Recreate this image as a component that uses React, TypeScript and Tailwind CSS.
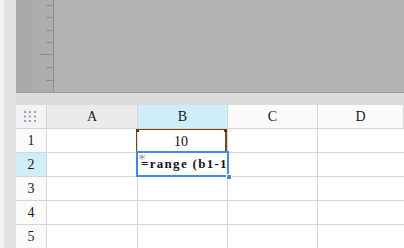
import React from "react";

const serif = { fontFamily: "'Liberation Serif', 'DejaVu Serif', serif" };

const cols = [
  { label: "A", w: "w-[91px]", bg: "bg-[#ebebeb]" },
  { label: "B", w: "w-[90px]", bg: "bg-[#cdeefa]" },
  { label: "C", w: "w-[90px]", bg: "bg-[#fafafa]" },
  { label: "D", w: "flex-1", bg: "bg-[#fafafa]" },
];

function Ruler() {
  const ticks = [5, 17, 30, 42, 54, 67, 80];
  return (
    <svg width="21" height="92" className="block">
      {ticks.map((y) => (
        <line key={y} x1={y === 54 ? 7 : 14} x2={21} y1={y + 0.5} y2={y + 0.5} stroke="#8e8e8e" strokeWidth={1} />
      ))}
    </svg>
  );
}

function DotGrid() {
  return (
    <svg width="14" height="12" className="block">
      {[0, 1, 2].map((r) =>
        [0, 1, 2].map((c) => <rect key={`${r}${c}`} x={c * 5} y={r * 4.5} width={2} height={2} fill="#a2a2a8" />)
      )}
    </svg>
  );
}

export default function App() {
  const rows = [1, 2, 3, 4, 5];
  return (
    <div className="flex w-[404px] h-[248px] overflow-hidden bg-white" style={serif}>
      <div className="w-[4px] bg-[#f1f1f1]" />
      <div className="w-[12px] bg-[#e2e2e2]" />
      <div className="flex-1 flex flex-col min-w-0">
        {/* preview area */}
        <div className="h-[93px] flex border-b border-[#9c9c9c] shrink-0">
          <div className="w-[16px] bg-[#a9a9a9]" />
          <div className="w-[21px] bg-[#adadad]">
            <Ruler />
          </div>
          <div className="w-px bg-[#8f8f8f]" />
          <div className="flex-1 bg-[#b3b3b3]" />
        </div>
        <div className="h-[12px] bg-[#dcdcdc] shrink-0" />

        {/* header row */}
        <div className="flex h-[24px] shrink-0 border-b border-[#d6d6d6] text-[14px] text-[#1a1a1a]">
          <div className="w-[31px] flex items-center justify-center bg-[#f3f3f6] border-r border-[#d6d6d6]">
            <DotGrid />
          </div>
          {cols.map((c) => (
            <div key={c.label} className={`${c.w} ${c.bg} flex items-center justify-center border-r border-[#d6d6d6]`}>
              {c.label}
            </div>
          ))}
        </div>

        {rows.map((r) => (
          <div key={r} className="flex h-[24px] shrink-0 border-b border-[#d6d6d6] text-[14px] text-[#1a1a1a]">
            <div
              className={`w-[31px] flex items-center justify-center border-r border-[#d6d6d6] ${
                r === 2 ? "bg-[#d0eefa]" : "bg-[#fbfbfb]"
              }`}
            >
              {r}
            </div>
            <div className="w-[91px] border-r border-[#d6d6d6]" />
            <div className="w-[90px] border-r border-[#d6d6d6] relative">
              {r === 1 && (
                <div className="absolute left-[-2px] top-0 w-[91px] h-[24px] border border-[#7b4a1c] border-r-2 flex items-center justify-center text-[#111]">
                  10
                  <span className="absolute left-[-1px] top-[-1px] w-[3px] h-[3px] bg-[#5a3410]" />
                  <span className="absolute right-[-2px] top-[-1px] w-[3px] h-[3px] bg-[#5a3410]" />
                </div>
              )}
              {r === 2 && (
                <div className="absolute left-[-2px] top-[-2px] w-[93px] h-[26px] border-2 border-[#3f88ee] bg-white flex items-center pl-[3px] text-[13px] text-[#111] font-semibold z-10">
                  <svg width="6" height="6" className="absolute left-[1px] top-[1px]">
                    <path d="M3 0V6M0 1.5L6 4.5M0 4.5L6 1.5" stroke="#8a8a8a" strokeWidth="0.8" />
                  </svg>
                  <span className="whitespace-nowrap tracking-[1.3px]">=range (b1-1</span>
                  <span className="absolute right-[-5px] bottom-[-5px] w-[6px] h-[6px] bg-[#3f88ee] border border-white" />
                </div>
              )}
            </div>
            <div className="w-[90px] border-r border-[#d6d6d6]" />
            <div className="flex-1" />
          </div>
        ))}
      </div>
    </div>
  );
}
